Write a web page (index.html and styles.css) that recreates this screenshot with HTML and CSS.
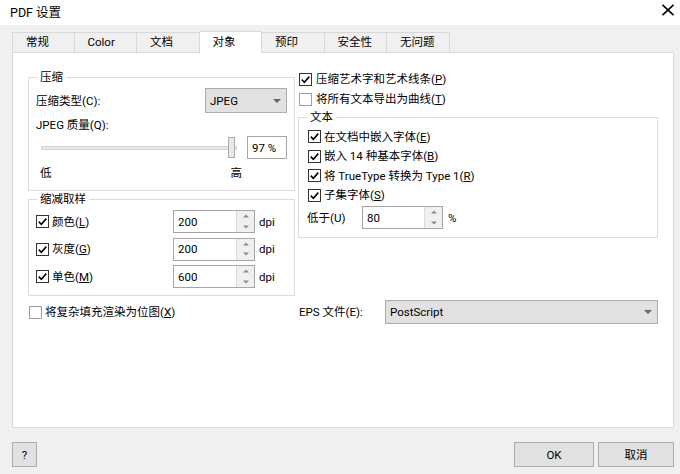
FILE: index.html
```html
<!DOCTYPE html>
<html lang="zh-CN">
<head>
<meta charset="utf-8">
<title>PDF 设置</title>
<link rel="stylesheet" href="styles.css">
</head>
<body>
<div class="titlebar">
  <span class="title">PDF 设置</span>
  <svg class="close" width="14" height="12" viewBox="0 0 14 12"><path d="M1.5 0.8 L12.5 11.2 M12.5 0.8 L1.5 11.2" stroke="#000" stroke-width="1.6" fill="none"/></svg>
</div>
<div class="window">
  <div class="tabs">
    <div class="tab first">常规</div>
    <div class="tab">Color</div>
    <div class="tab">文档</div>
    <div class="tab active">对象</div>
    <div class="tab">预印</div>
    <div class="tab">安全性</div>
    <div class="tab">无问题</div>
  </div>
  <div class="panel">
    <div class="cols">
      <div class="col-left">
        <fieldset class="group g1">
          <legend>压缩</legend>
          <div class="row-type">
            <span>压缩类型(C):</span>
            <div class="select s-jpeg"><span>JPEG</span><svg width="8" height="4" viewBox="0 0 8 4"><path d="M0 0H8L4 4Z" fill="#666"/></svg></div>
          </div>
          <div class="row-label">JPEG 质量(Q):</div>
          <div class="slider-row">
            <div class="slider">
              <div class="track"></div>
              <div class="thumb"></div>
            </div>
            <div class="pct">97 %</div>
          </div>
          <div class="lowhigh"><span>低</span><span>高</span></div>
        </fieldset>
        <fieldset class="group g2">
          <legend>缩减取样</legend>
          <div class="dpi-row first">
            <div class="check-label"><span class="cb"><svg width="11" height="11" viewBox="0 0 11 11"><path d="M1.8 5.6 L4.3 8.2 L9.3 2.6" fill="none" stroke="#000" stroke-width="1.6"/></svg></span><span>颜色(<u>L</u>)</span></div>
            <div class="spin"><div class="val">200</div><div class="btns"><span><svg width="6" height="4" viewBox="0 0 6 4"><path d="M0 3.5 L3 0.5 L6 3.5Z" fill="#8a8a8a"/></svg></span><span><svg width="6" height="4" viewBox="0 0 6 4"><path d="M0 0.5 L3 3.5 L6 0.5Z" fill="#8a8a8a"/></svg></span></div></div>
            <span class="unit">dpi</span>
          </div>
          <div class="dpi-row">
            <div class="check-label"><span class="cb"><svg width="11" height="11" viewBox="0 0 11 11"><path d="M1.8 5.6 L4.3 8.2 L9.3 2.6" fill="none" stroke="#000" stroke-width="1.6"/></svg></span><span>灰度(<u>G</u>)</span></div>
            <div class="spin"><div class="val">200</div><div class="btns"><span><svg width="6" height="4" viewBox="0 0 6 4"><path d="M0 3.5 L3 0.5 L6 3.5Z" fill="#8a8a8a"/></svg></span><span><svg width="6" height="4" viewBox="0 0 6 4"><path d="M0 0.5 L3 3.5 L6 0.5Z" fill="#8a8a8a"/></svg></span></div></div>
            <span class="unit">dpi</span>
          </div>
          <div class="dpi-row">
            <div class="check-label"><span class="cb"><svg width="11" height="11" viewBox="0 0 11 11"><path d="M1.8 5.6 L4.3 8.2 L9.3 2.6" fill="none" stroke="#000" stroke-width="1.6"/></svg></span><span>单色(<u>M</u>)</span></div>
            <div class="spin"><div class="val">600</div><div class="btns"><span><svg width="6" height="4" viewBox="0 0 6 4"><path d="M0 3.5 L3 0.5 L6 3.5Z" fill="#8a8a8a"/></svg></span><span><svg width="6" height="4" viewBox="0 0 6 4"><path d="M0 0.5 L3 3.5 L6 0.5Z" fill="#8a8a8a"/></svg></span></div></div>
            <span class="unit">dpi</span>
          </div>
        </fieldset>
      </div>
      <div class="col-right">
        <div class="cb-row top"><span class="cb"><svg width="11" height="11" viewBox="0 0 11 11"><path d="M1.8 5.6 L4.3 8.2 L9.3 2.6" fill="none" stroke="#000" stroke-width="1.6"/></svg></span><span>压缩艺术字和艺术线条(<u>P</u>)</span></div>
        <div class="cb-row top"><span class="cb off"></span><span>将所有文本导出为曲线(<u>T</u>)</span></div>
        <fieldset class="group g-text">
          <legend>文本</legend>
          <div class="cb-row sm first"><span class="cb"><svg width="11" height="11" viewBox="0 0 11 11"><path d="M1.8 5.6 L4.3 8.2 L9.3 2.6" fill="none" stroke="#000" stroke-width="1.6"/></svg></span><span>在文档中嵌入字体(<u>E</u>)</span></div>
          <div class="cb-row sm"><span class="cb"><svg width="11" height="11" viewBox="0 0 11 11"><path d="M1.8 5.6 L4.3 8.2 L9.3 2.6" fill="none" stroke="#000" stroke-width="1.6"/></svg></span><span>嵌入 14 种基本字体(<u>B</u>)</span></div>
          <div class="cb-row sm"><span class="cb"><svg width="11" height="11" viewBox="0 0 11 11"><path d="M1.8 5.6 L4.3 8.2 L9.3 2.6" fill="none" stroke="#000" stroke-width="1.6"/></svg></span><span>将 TrueType 转换为 Type 1(<u>R</u>)</span></div>
          <div class="cb-row sm"><span class="cb"><svg width="11" height="11" viewBox="0 0 11 11"><path d="M1.8 5.6 L4.3 8.2 L9.3 2.6" fill="none" stroke="#000" stroke-width="1.6"/></svg></span><span>子集字体(<u>S</u>)</span></div>
          <div class="low-row">
            <span class="low-label">低于(U)</span>
            <div class="spin s80"><div class="val">80</div><div class="btns"><span><svg width="6" height="4" viewBox="0 0 6 4"><path d="M0 3.5 L3 0.5 L6 3.5Z" fill="#8a8a8a"/></svg></span><span><svg width="6" height="4" viewBox="0 0 6 4"><path d="M0 0.5 L3 3.5 L6 0.5Z" fill="#8a8a8a"/></svg></span></div></div>
            <span class="unit u-pct">%</span>
          </div>
        </fieldset>
      </div>
    </div>
    <div class="bottom">
      <div class="bottom-left"><span class="cb off"></span><span>将复杂填充渲染为位图(<u>X</u>)</span></div>
      <div class="bottom-right">
        <span class="eps-label">EPS 文件(E):</span>
        <div class="select s-eps"><span>PostScript</span><svg width="8" height="4" viewBox="0 0 8 4"><path d="M0 0H8L4 4Z" fill="#666"/></svg></div>
      </div>
    </div>
  </div>
  <div class="footer">
    <div class="btn help">?</div>
    <div class="btn ok">OK</div>
    <div class="btn cancel">取消</div>
  </div>
</div>
</body>
</html>
```
FILE: styles.css
```css
* { box-sizing: border-box; }
body {
  margin: 0;
  width: 680px;
  height: 474px;
  overflow: hidden;
  background: #f0f0f0;
  font-family: Roboto, "Noto Sans CJK SC", sans-serif;
  font-size: 11.5px;
  line-height: 16px;
  color: #000;
}
u { text-decoration: underline; text-underline-offset: 1px; }

.titlebar {
  height: 25px;
  background: #fff;
  display: flex;
  align-items: center;
  justify-content: space-between;
  padding: 0 5px 0 10px;
}
.title { font-size: 12.5px; }
.close { margin-top: -5px; }

.window { padding: 0 6px 0 12px; }

.tabs {
  display: flex;
  align-items: flex-end;
  height: 27px;
}
.tab {
  width: 62.5px;
  height: 20px;
  padding-left: 13px;
  line-height: 18px;
  border-top: 1px solid #d9d9d9;
  border-right: 1px solid #d9d9d9;
  background: #f0f0f0;
  white-space: nowrap;
}
.tab.first { border-left: 1px solid #d9d9d9; }
.tab.active {
  height: 22px;
  margin-bottom: -1px;
  padding-top: 1px;
  background: #fff;
  position: relative;
  z-index: 1;
}

.panel {
  height: 376px;
  background: #fff;
  border: 1px solid #d9d9d9;
  padding: 16px 15px 0 15px;
}
.cols {
  display: flex;
  gap: 3px;
  align-items: flex-start;
}
.col-left { width: 267px; }
.col-right { width: 360px; }

fieldset.group {
  margin: 0;
  min-width: 0;
  border: 1px solid #dcdcdc;
  padding: 0 7px 9px 7px;
}
fieldset.group legend {
  padding: 0 3px;
  margin-left: 1px;
  line-height: 16px;
}

.row-type {
  margin-top: 3px;
  height: 25px;
  display: flex;
  align-items: center;
  justify-content: space-between;
}
.select {
  height: 25px;
  border: 1px solid #adadad;
  background: #e1e1e1;
  display: flex;
  align-items: center;
  justify-content: space-between;
  padding: 0 5px 0 4px;
}
.s-jpeg { width: 82px; }
.row-label { margin-top: 4px; }
.slider-row {
  margin-top: 3px;
  height: 23px;
  display: flex;
  align-items: center;
}
.slider {
  position: relative;
  margin-left: 5px;
  width: 196px;
  height: 23px;
  display: flex;
  align-items: center;
}
.track {
  width: 100%;
  height: 4px;
  background: #e7e7e7;
  border: 1px solid #d6d6d6;
}
.thumb {
  position: absolute;
  left: 187px;
  top: 1px;
  width: 7px;
  height: 21px;
  background: #e8e8e8;
  border: 1px solid #adadad;
}
.pct {
  margin-left: auto;
  width: 40px;
  height: 23px;
  border: 1px solid #a5a5a5;
  padding-left: 4px;
  display: flex;
  align-items: center;
}
.lowhigh {
  margin-top: 6px;
  width: 206px;
  padding-left: 4px;
  display: flex;
  justify-content: space-between;
}

fieldset.group.g2 { padding-bottom: 7px; }
.dpi-row {
  display: flex;
  align-items: center;
  height: 23px;
  margin-top: 4.5px;
}
.dpi-row.first { margin-top: 3px; }
.check-label {
  width: 137px;
  display: flex;
  align-items: center;
  gap: 3px;
}
.cb {
  width: 13px;
  height: 13px;
  flex: none;
  border: 1px solid #333;
  background: #fff;
  display: flex;
  align-items: center;
  justify-content: center;
}
.cb.off { border-color: #a0a0a0; }
.spin {
  display: flex;
  width: 82px;
  height: 23px;
  border: 1px solid #a5a5a5;
  background: #fff;
}
.spin .val {
  flex: 1;
  padding-left: 4px;
  display: flex;
  align-items: center;
}
.spin .btns {
  width: 18px;
  border-left: 1px solid #dadada;
  background: #f0f0f0;
  display: flex;
  flex-direction: column;
}
.spin .btns span {
  flex: 1;
  display: flex;
  align-items: center;
  justify-content: center;
}
.unit { margin-left: 4px; }

.cb-row {
  display: flex;
  align-items: center;
  gap: 4px;
  height: 20px;
}
.cb-row.top { margin-left: 1px; }
fieldset.group.g-text { padding: 0 9px 8px 9px; }
fieldset.group.g-text legend { margin-left: -1px; }
.cb-row.sm { height: 19.5px; gap: 3px; }
.cb-row.sm.first { margin-top: 2px; }
.low-row {
  margin-top: 1px;
  height: 23px;
  display: flex;
  align-items: center;
}
.low-label { width: 55px; margin-left: -1px; }
.spin.s80 { width: 81px; }
.u-pct { margin-left: 5px; }

.bottom {
  display: flex;
  gap: 3px;
  margin-top: 4px;
  height: 24px;
  align-items: center;
}
.bottom-left {
  width: 267px;
  display: flex;
  align-items: center;
  gap: 3px;
  padding-left: 1px;
}
.bottom-right {
  width: 360px;
  display: flex;
  align-items: center;
  padding-left: 1px;
}
.eps-label { width: 86px; }
.s-eps { flex: 1; height: 24px; }

.footer {
  display: flex;
  align-items: center;
  margin-top: 14px;
}
.btn {
  height: 25px;
  border: 1px solid #adadad;
  background: #e1e1e1;
  display: flex;
  align-items: center;
  justify-content: center;
}
.help { width: 25px; }
.ok { margin-left: auto; width: 80px; }
.cancel { width: 76px; margin-left: 4px; }
```
